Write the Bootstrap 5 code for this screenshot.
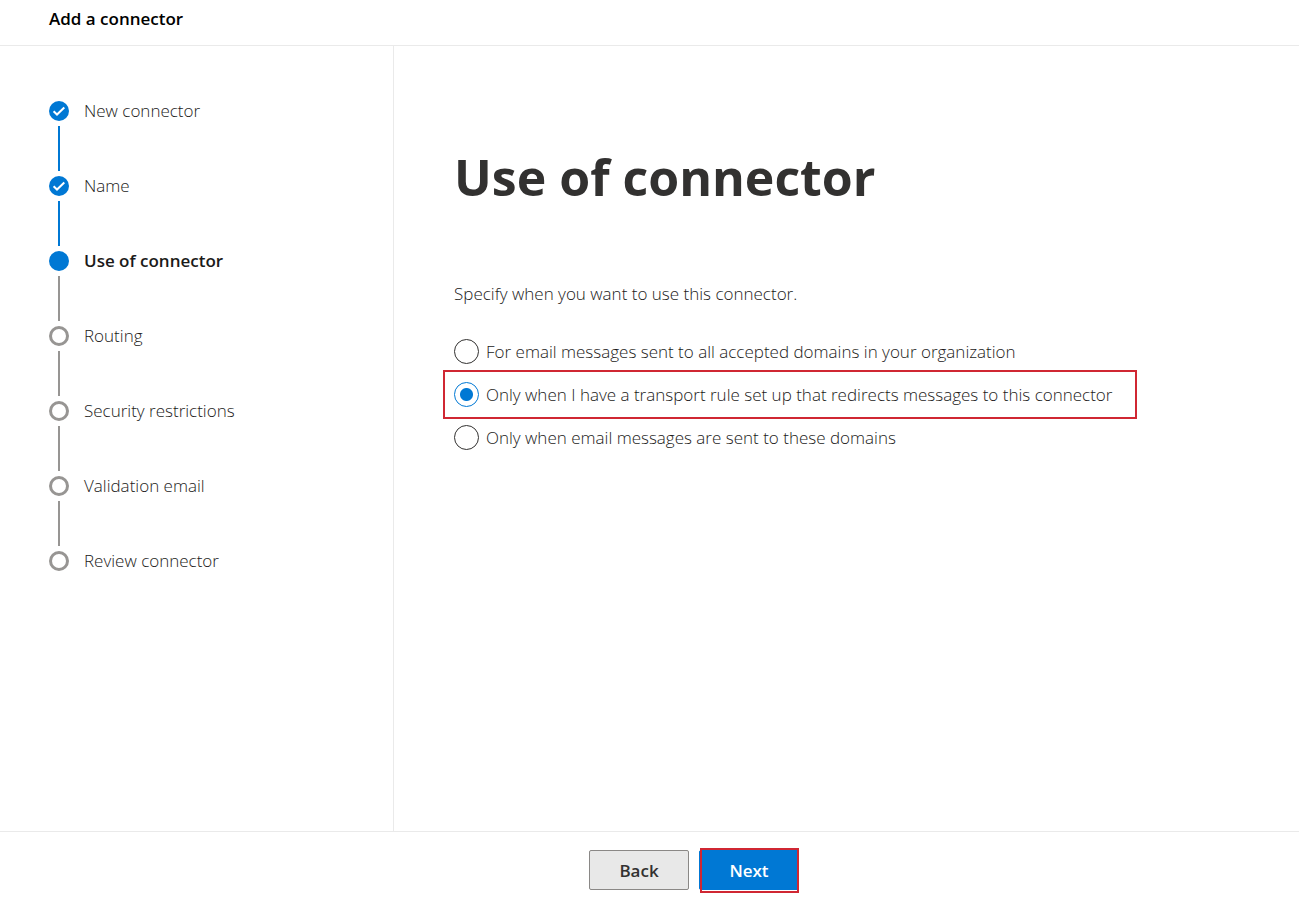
<!DOCTYPE html>
<html lang="en">
<head>
<meta charset="utf-8">
<meta name="viewport" content="width=device-width, initial-scale=1">
<title>Add a connector</title>
<link href="https://cdn.jsdelivr.net/npm/bootstrap@5.3.0/dist/css/bootstrap.min.css" rel="stylesheet">
<style>
  :root { --brand: #0078d4; --ink: #323130; --rule: #eaeaea; --idle: #979593; --callout: #d02733; }
  body { font-family: "Open Sans", "Noto Sans", sans-serif; font-size: 17px; font-weight: 300; line-height: 24px; color: #1b1a19; }
  .top-bar { padding: 7px 49px 14px; border-bottom: 1px solid var(--rule); }
  .top-bar h1 { font-size: 17px; line-height: 24px; color: #000; }
  .steps-pane { flex: 0 0 394px; padding: 53px 48px 24px 49px; border-right: 1px solid var(--rule); }
  .step { display: grid; grid-template-columns: 20px 1fr; column-gap: 15px; align-items: center; color: inherit; text-decoration: none; }
  .steps-list li:not(:last-child)::after { content: ""; display: block; width: 2px; height: 45px; margin: 3px 0 3px 9px; background: var(--idle); }
  .steps-list li.done:not(:last-child)::after { background: var(--brand); }
  .dot { width: 20px; height: 20px; border: 3px solid var(--idle); border-radius: 50%; }
  .current .dot { border-color: var(--brand); background: var(--brand); }
  .form-pane { padding: 91px 60px 24px; }
  .form-pane h2 { font-size: 50px; line-height: 80px; margin-bottom: 65px; color: var(--ink); }
  .intro { margin-bottom: 27px; }
  .choices { margin-left: -11px; }
  .choice { gap: 7px; padding: 4px 23px 4px 9px; border: 2px solid transparent; }
  .choice.marked { padding-top: 10px; padding-bottom: 10px; border-color: var(--callout); }
  .choice .form-check-input { flex: none; width: 25px; height: 25px; margin: 0; border: 1px solid #323130; box-shadow: none; }
  .choice .form-check-input:checked { border-color: var(--brand); background: radial-gradient(circle, var(--brand) 6px, #fff 7px); }
  .bottom-bar { padding: 18px 0 10px 89px; gap: 10px; border-top: 1px solid var(--rule); }
  .wizard-btn { width: 100px; height: 40px; padding: 2px 0 0; font-size: 17px; font-weight: 600; border-radius: 2px; }
  .btn-back { --bs-btn-bg: #e8e8e8; --bs-btn-color: #323130; --bs-btn-border-color: #8a8886; }
  .btn-next { --bs-btn-bg: var(--brand); --bs-btn-color: #fff; --bs-btn-border-color: var(--brand); }
  .btn-next::after { content: ""; position: absolute; inset: -3px -1px -4px 0; border: 2px solid var(--callout); }
</style>
</head>
<body class="d-flex flex-column min-vh-100 bg-white">
<header class="top-bar"><h1 class="fw-semibold m-0">Add a connector</h1></header>
<div class="d-flex flex-grow-1">
  <nav class="steps-pane" aria-label="Steps">
    <ol class="steps-list list-unstyled m-0">
      <li class="done"><a class="step" href="#"><svg width="20" height="20" viewBox="0 0 20 20" aria-hidden="true"><circle cx="10" cy="10" r="10" fill="#0078d4"/><path d="M4.6 10.2l3.4 3.3 7.3-7" fill="none" stroke="#fff" stroke-width="2"/></svg><span>New connector</span></a></li>
      <li class="done"><a class="step" href="#"><svg width="20" height="20" viewBox="0 0 20 20" aria-hidden="true"><circle cx="10" cy="10" r="10" fill="#0078d4"/><path d="M4.6 10.2l3.4 3.3 7.3-7" fill="none" stroke="#fff" stroke-width="2"/></svg><span>Name</span></a></li>
      <li class="current"><a class="step fw-semibold" href="#" aria-current="step"><span class="dot"></span><span>Use of connector</span></a></li>
      <li><a class="step" href="#"><span class="dot"></span><span>Routing</span></a></li>
      <li><a class="step" href="#"><span class="dot"></span><span>Security restrictions</span></a></li>
      <li><a class="step" href="#"><span class="dot"></span><span>Validation email</span></a></li>
      <li><a class="step" href="#"><span class="dot"></span><span>Review connector</span></a></li>
    </ol>
  </nav>
  <main class="form-pane flex-grow-1">
    <h2 class="fw-bold">Use of connector</h2>
    <p class="intro" id="intro">Specify when you want to use this connector.</p>
    <form class="choices d-flex flex-column align-items-start" role="radiogroup" aria-labelledby="intro">
      <div class="choice d-flex align-items-center">
        <input class="form-check-input" type="radio" name="use" id="use-all"><label for="use-all">For email messages sent to all accepted domains in your organization</label>
      </div>
      <div class="choice marked d-flex align-items-center">
        <input class="form-check-input" type="radio" name="use" id="use-rule" checked><label for="use-rule">Only when I have a transport rule set up that redirects messages to this connector</label>
      </div>
      <div class="choice d-flex align-items-center">
        <input class="form-check-input" type="radio" name="use" id="use-domains"><label for="use-domains">Only when email messages are sent to these domains</label>
      </div>
    </form>
  </main>
</div>
<footer class="bottom-bar d-flex justify-content-center">
  <button type="button" class="btn wizard-btn btn-back">Back</button>
  <button type="button" class="btn wizard-btn btn-next position-relative">Next</button>
</footer>
<script src="https://cdn.jsdelivr.net/npm/bootstrap@5.3.0/dist/js/bootstrap.bundle.min.js"></script>
</body>
</html>
